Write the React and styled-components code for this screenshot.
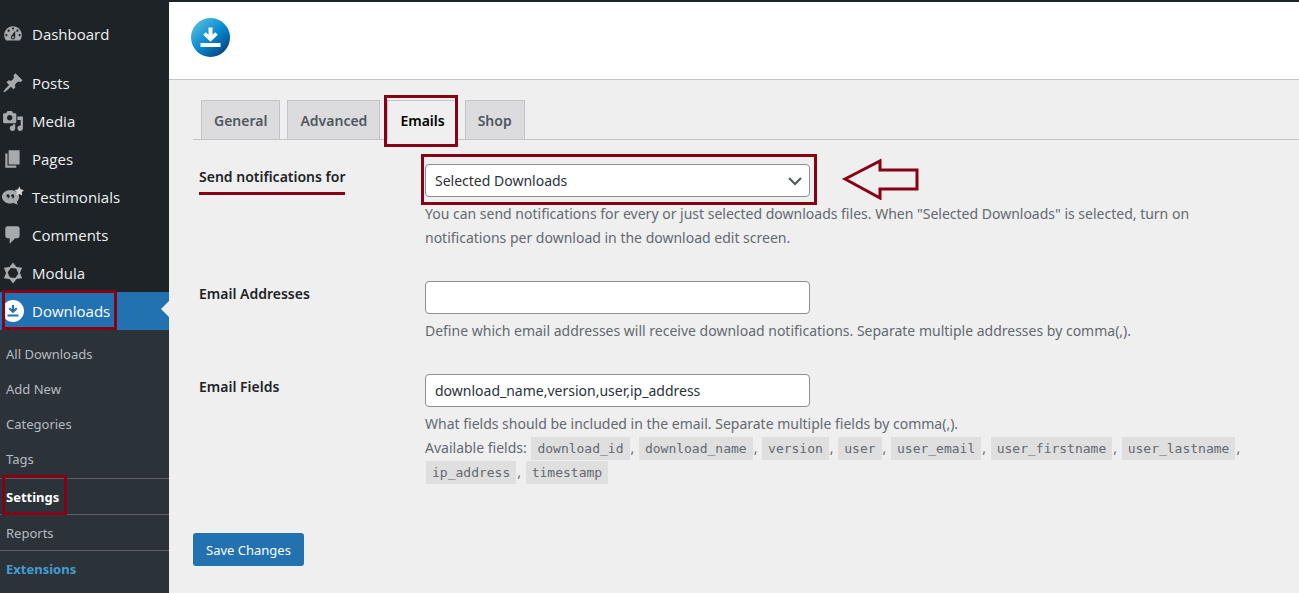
import React from "react";
import styled, { createGlobalStyle, css } from "styled-components";

const MARK = "#880015";

const GlobalStyle = createGlobalStyle`
    *, *::before, *::after {
        box-sizing: border-box;
    }
    body {
        margin: 0;
        background-color: #efefef;
        font-family: "Noto Sans", "Open Sans", sans-serif;
        font-size: 14px;
        color: #1d2327;
    }
    ul {
        margin: 0;
        padding: 0;
        list-style: none;
    }
    a {
        text-decoration: none;
    }
`;

const Page = styled.div`
    display: grid;
    grid-template-columns: 169px minmax(0, 1fr);
    min-height: 100vh;
`;

/* hand drawn style frame laid over the part it points at */
const marked = css`
    position: relative;

    &::after {
        content: "";
        position: absolute;
        inset: ${(p) => p.$inset || "-10px -7px"};
        border: 3px solid ${MARK};
        pointer-events: none;
    }
`;

const Sidebar = styled.nav`
    display: flex;
    flex-direction: column;
    background-color: #1d2327;
    padding-top: 15px;
`;

const Menu = styled.ul`
    display: flex;
    flex-direction: column;
    & + & {
        margin-top: 11px;
    }
`;

const MenuLink = styled.a`
    position: relative;
    display: flex;
    align-items: center;
    gap: 8px;
    height: 38px;
    padding-left: 2px;
    font-family: "Open Sans", sans-serif;
    font-size: 15px;
    color: ${(p) => (p.$current ? "#fff" : "#f0f0f1")};
    background-color: ${(p) => (p.$current ? "#2271b1" : "transparent")};

    svg {
        width: 22px;
        height: 22px;
        flex: none;
        fill: ${(p) => (p.$current ? "#fff" : "#a7aaad")};
    }
`;

const Pointer = styled.span`
    position: absolute;
    right: 0;
    top: 9px;
    border: 8px solid transparent;
    border-left: 0;
    border-right-color: #efefef;
`;

const MenuMark = styled.span`
    position: absolute;
    inset: -2px 52px 0 2px;
    border: 3px solid ${MARK};
`;

const SubMenu = styled.ul`
    flex: 1;
    padding-top: 8px;
    background-color: #2c3338;
`;

const SubItem = styled.li`
    display: flex;
    align-items: center;
    height: ${(p) => (p.$ruled ? "36px" : "35px")};
    padding: ${(p) => (p.$ruled ? "0 0 0 6px" : "0 0 3px 6px")};
    border-top: ${(p) => (p.$ruled ? "1px solid #5a6065" : "0")};
`;

const SubLink = styled.a`
    font-size: 13px;
    line-height: 18px;
    color: ${(p) => p.$color || "#b5bbc0"};
    font-weight: ${(p) => (p.$color ? 700 : 400)};
    ${(p) => p.$marked && marked}
`;

const Main = styled.main`
    border-top: 2px solid #1d2327;
`;

const Header = styled.header`
    display: flex;
    align-items: center;
    height: 78px;
    padding: 0 22px 6px;
    background-color: #fff;
    border-bottom: 1px solid #c3c4c7;

    svg {
        width: 39px;
        height: 39px;
    }
`;

const Tabs = styled.nav`
    display: flex;
    gap: 7px;
    margin: 20px 0 0 24px;
    padding-left: 8px;
    border-bottom: 1px solid #c3c4c7;
`;

const Tab = styled.a`
    height: 40px;
    margin-bottom: -1px;
    padding: 0 12px;
    border: 1px solid #c3c4c7;
    border-bottom-color: ${(p) => (p.$active ? "#efefef" : "#c3c4c7")};
    background-color: ${(p) => (p.$active ? "#efefef" : "#dcdcde")};
    color: ${(p) => (p.$active ? "#000" : "#50575e")};
    font-weight: 600;
    line-height: 39px;
    ${(p) => p.$active && marked}
`;

const Form = styled.form`
    padding: 24px 30px 24px 24px;
`;

const Row = styled.div`
    display: grid;
    grid-template-columns: 226px minmax(0, 1fr);
    padding-left: 6px;
    margin-bottom: 31px;
`;

const Label = styled.label`
    justify-self: start;
    align-self: start;
    padding-top: 3px;
    font-size: 14px;
    font-weight: 600;
    line-height: 20px;
    ${(p) =>
        p.$underlined &&
        css`
            padding-bottom: 5px;
            border-bottom: 3px solid ${MARK};
        `}
`;

const control = css`
    display: block;
    width: 100%;
    height: 33px;
    padding: 0 9px;
    border: 1px solid #8c8f94;
    border-radius: 4px;
    background-color: #fff;
    color: #2c3338;
    font-family: inherit;
    font-size: 14px;
`;

const Input = styled.input`
    ${control}
    max-width: 385px;
`;

const Select = styled.select`
    ${control}
    appearance: none;
`;

const SelectBox = styled.div`
    ${marked}
    max-width: 385px;
`;

const Chevron = styled.svg`
    position: absolute;
    right: 8px;
    top: 10px;
    width: 14px;
    height: 14px;
    fill: none;
    stroke: #50575e;
    stroke-width: 2;
    pointer-events: none;
`;

const Arrow = styled.svg`
    position: absolute;
    left: calc(100% + 32px);
    top: -6px;
    width: 78px;
    height: 42px;
    fill: none;
    stroke: ${MARK};
    stroke-width: 3;
`;

const Description = styled.p`
    margin: 5px 0 0;
    color: #646970;
    font-size: 14px;
    line-height: 24px;
`;

const Code = styled.code`
    padding: 4px 6px;
    margin: 0 1px;
    background-color: #dfdfdf;
    font-family: "DejaVu Sans Mono", monospace;
    font-size: 13px;
    line-height: 1;
`;

const SaveButton = styled.button`
    height: 33px;
    margin-top: 18px;
    padding: 0 13px;
    border: 0;
    border-radius: 3px;
    background-color: #2271b1;
    color: #fff;
    font-family: inherit;
    font-size: 13px;
`;

const DashboardIcon = () => (
    <svg viewBox="0 0 20 20">
        <path d="M3.76 16h12.48c1.1-1.37 1.76-3.11 1.76-5 0-4.42-3.58-8-8-8s-8 3.58-8 8c0 1.89.66 3.63 1.76 5zM10 4c.55 0 1 .45 1 1s-.45 1-1 1-1-.45-1-1 .45-1 1-1zM6 6c.55 0 1 .45 1 1s-.45 1-1 1-1-.45-1-1 .45-1 1-1zm8 0c.55 0 1 .45 1 1s-.45 1-1 1-1-.45-1-1 .45-1 1-1zm-5.37 5.55L12 7v6c0 1.1-.9 2-2 2s-2-.9-2-2c0-.57.24-1.08.63-1.45zM4 10c.55 0 1 .45 1 1s-.45 1-1 1-1-.45-1-1 .45-1 1-1zm12 0c.55 0 1 .45 1 1s-.45 1-1 1-1-.45-1-1 .45-1 1-1zm-5 3c0-.55-.45-1-1-1s-1 .45-1 1 .45 1 1 1 1-.45 1-1z" />
    </svg>
);

const PostsIcon = () => (
    <svg viewBox="0 0 20 20">
        <path d="M10.44 3.02l1.82-1.82 6.36 6.35-1.83 1.82c-1.05-.68-2.48-.57-3.41.36l-.75.75c-.92.93-1.04 2.35-.35 3.41l-1.83 1.82-2.41-2.41-2.8 2.79c-.42.42-3.38 2.71-3.8 2.29s1.86-3.39 2.28-3.81l2.79-2.79L4.1 9.36l1.83-1.82c1.05.69 2.48.57 3.4-.36l.75-.75c.93-.92 1.05-2.35.36-3.41z" />
    </svg>
);

const MediaIcon = () => (
    <svg viewBox="0 0 20 20">
        <path d="M13 11V4c0-.55-.45-1-1-1h-1.67L9 1H5L3.67 3H2c-.55 0-1 .45-1 1v7c0 .55.45 1 1 1h10c.55 0 1-.45 1-1zM7 4.5c1.38 0 2.5 1.12 2.5 2.5S8.38 9.5 7 9.5 4.5 8.38 4.5 7 5.62 4.5 7 4.5zM14 6h5v10.5c0 1.38-1.12 2.5-2.5 2.5S14 17.88 14 16.5s1.12-2.5 2.5-2.5c.17 0 .34.02.5.05V9h-3V6zm-4 8.05V13h2v3.5c0 1.38-1.12 2.5-2.5 2.5S7 17.88 7 16.5 8.12 14 9.5 14c.17 0 .34.02.5.05z" />
    </svg>
);

const PagesIcon = () => (
    <svg viewBox="0 0 20 20">
        <path d="M6 15V2h10v13H6zm-1 1h8v2H3V5h2v11z" />
    </svg>
);

const TestimonialsIcon = () => (
    <svg viewBox="0 0 22 22">
        <path d="M8.5 4C3.8 4 0 7 0 10.8s3.8 6.8 8.5 6.8c1.2 0 2.3-.2 3.3-.5 1.3.9 2.7 1.3 4.2 1.3-.7-.8-1.1-1.8-1.1-2.7 1.4-1.2 2.2-2.9 2.2-4.9C17.1 7 13.2 4 8.5 4z" />
        <path
            fill="#1d2327"
            d="M5.8 8.3a1.5 1.5 0 1 0 .4 3c-.1.7-.5 1.2-1.1 1.6 1.6-.3 2.5-1.5 2.5-3A1.6 1.6 0 0 0 5.8 8.3zm4.7 0a1.5 1.5 0 1 0 .4 3c-.1.7-.5 1.2-1.1 1.6 1.6-.3 2.5-1.5 2.5-3a1.6 1.6 0 0 0-1.8-1.6z"
        />
        <path
            fill="#d5d7d9"
            d="M17.3.5l1.5 3 3.2.5-2.3 2.3.5 3.2-2.9-1.5-2.9 1.5.5-3.2L12.6 4l3.2-.5z"
        />
    </svg>
);

const CommentsIcon = () => (
    <svg viewBox="0 0 20 20">
        <path d="M5 2h9c1.1 0 2 .9 2 2v7c0 1.1-.9 2-2 2h-2l-5 5v-5H5c-1.1 0-2-.9-2-2V4c0-1.1.9-2 2-2z" />
    </svg>
);

const ModulaIcon = () => (
    <svg viewBox="-11 -11 22 22">
        {[0, 60, 120, 180, 240, 300].map((deg) => (
            <path key={deg} transform={`rotate(${deg})`} d="M0-10.5L4.8-4.2-4.2-5.2z" />
        ))}
    </svg>
);

const DownloadsIcon = () => (
    <svg viewBox="0 0 22 22">
        <circle cx="11" cy="11" r="11" />
        <path fill="#2271b1" d="M9.9 5h2.2v4.2l2-1.7 1.4 1.5L11 13.3 6.5 9l1.4-1.5 2 1.7zM5.5 14.5h11v2h-11z" />
    </svg>
);

const Logo = () => (
    <svg viewBox="0 0 39 39" role="img" aria-label="Download Monitor">
        <defs>
            <linearGradient id="logo" x1="0.15" y1="0.1" x2="0.85" y2="0.9">
                <stop offset="0" stopColor="#4fb9dd" />
                <stop offset="0.55" stopColor="#0585d0" />
                <stop offset="1" stopColor="#05467f" />
            </linearGradient>
        </defs>
        <circle cx="19.5" cy="19.5" r="19.5" fill="url(#logo)" />
        <path fill="#fff" d="M17.5 9.5h4v7.2l2.7-2.5 2.6 2.6-7.3 7-7.3-7 2.6-2.6 2.7 2.5zM9.5 25h20v4h-20z" />
    </svg>
);

const menuItems = [
    { label: "Posts", Icon: PostsIcon },
    { label: "Media", Icon: MediaIcon },
    { label: "Pages", Icon: PagesIcon },
    { label: "Testimonials", Icon: TestimonialsIcon },
    { label: "Comments", Icon: CommentsIcon },
    { label: "Modula", Icon: ModulaIcon },
    { label: "Downloads", Icon: DownloadsIcon, current: true },
];

const subItems = [
    { label: "All Downloads" },
    { label: "Add New" },
    { label: "Categories" },
    { label: "Tags" },
    { label: "Settings", ruled: true, color: "#fff", marked: true },
    { label: "Reports", ruled: true },
    { label: "Extensions", ruled: true, color: "#409ed5" },
];

const fields = [
    "download_id",
    "download_name",
    "version",
    "user",
    "user_email",
    "user_firstname",
    "user_lastname",
    "ip_address",
    "timestamp",
];

export default function App() {
    return (
        <Page>
            <GlobalStyle />
            <Sidebar>
                <Menu>
                    <li>
                        <MenuLink href="#"><DashboardIcon />Dashboard</MenuLink>
                    </li>
                </Menu>
                <Menu>
                    {menuItems.map(({ label, Icon, current }) => (
                        <li key={label}>
                            <MenuLink href="#" $current={current}>
                                <Icon />
                                {label}
                                {current && <MenuMark />}
                                {current && <Pointer />}
                            </MenuLink>
                        </li>
                    ))}
                </Menu>
                <SubMenu>
                    {subItems.map((item) => (
                        <SubItem key={item.label} $ruled={item.ruled}>
                            <SubLink href="#" $color={item.color} $marked={item.marked} $inset="-13px -8px -9px -4px">
                                {item.label}
                            </SubLink>
                        </SubItem>
                    ))}
                </SubMenu>
            </Sidebar>
            <Main>
                <Header>
                    <Logo />
                </Header>
                <Tabs>
                    <Tab href="#">General</Tab>
                    <Tab href="#">Advanced</Tab>
                    <Tab href="#" $active $inset="-6px -1px -8px -4px">Emails</Tab>
                    <Tab href="#">Shop</Tab>
                </Tabs>
                <Form onSubmit={(e) => e.preventDefault()}>
                    <Row>
                        <Label htmlFor="send-for" $underlined>Send notifications for</Label>
                        <div>
                            <SelectBox $inset="-10px -7px -8px -4px">
                                <Select id="send-for" defaultValue="selected">
                                    <option value="selected">Selected Downloads</option>
                                    <option value="all">All Downloads</option>
                                </Select>
                                <Chevron viewBox="0 0 14 14">
                                    <path d="M1 4l6 6 6-6" />
                                </Chevron>
                                <Arrow viewBox="0 0 78 42">
                                    <path d="M3 21L38 3v9h37v19H38v9z" />
                                </Arrow>
                            </SelectBox>
                            <Description>
                                You can send notifications for every or just selected downloads files. When "Selected
                                Downloads" is selected, turn on notifications per download in the download edit screen.
                            </Description>
                        </div>
                    </Row>
                    <Row>
                        <Label htmlFor="addresses">Email Addresses</Label>
                        <div>
                            <Input id="addresses" type="text" />
                            <Description>
                                Define which email addresses will receive download notifications. Separate multiple
                                addresses by comma(,).
                            </Description>
                        </div>
                    </Row>
                    <Row>
                        <Label htmlFor="fields">Email Fields</Label>
                        <div>
                            <Input id="fields" type="text" defaultValue="download_name,version,user,ip_address" />
                            <Description>
                                What fields should be included in the email. Separate multiple fields by comma(,).
                                <br />
                                Available fields:{" "}
                                {fields.map((field, i) => (
                                    <React.Fragment key={field}>
                                        {i > 0 && ", "}
                                        <Code>{field}</Code>
                                    </React.Fragment>
                                ))}
                            </Description>
                        </div>
                    </Row>
                    <SaveButton type="submit">Save Changes</SaveButton>
                </Form>
            </Main>
        </Page>
    );
}
